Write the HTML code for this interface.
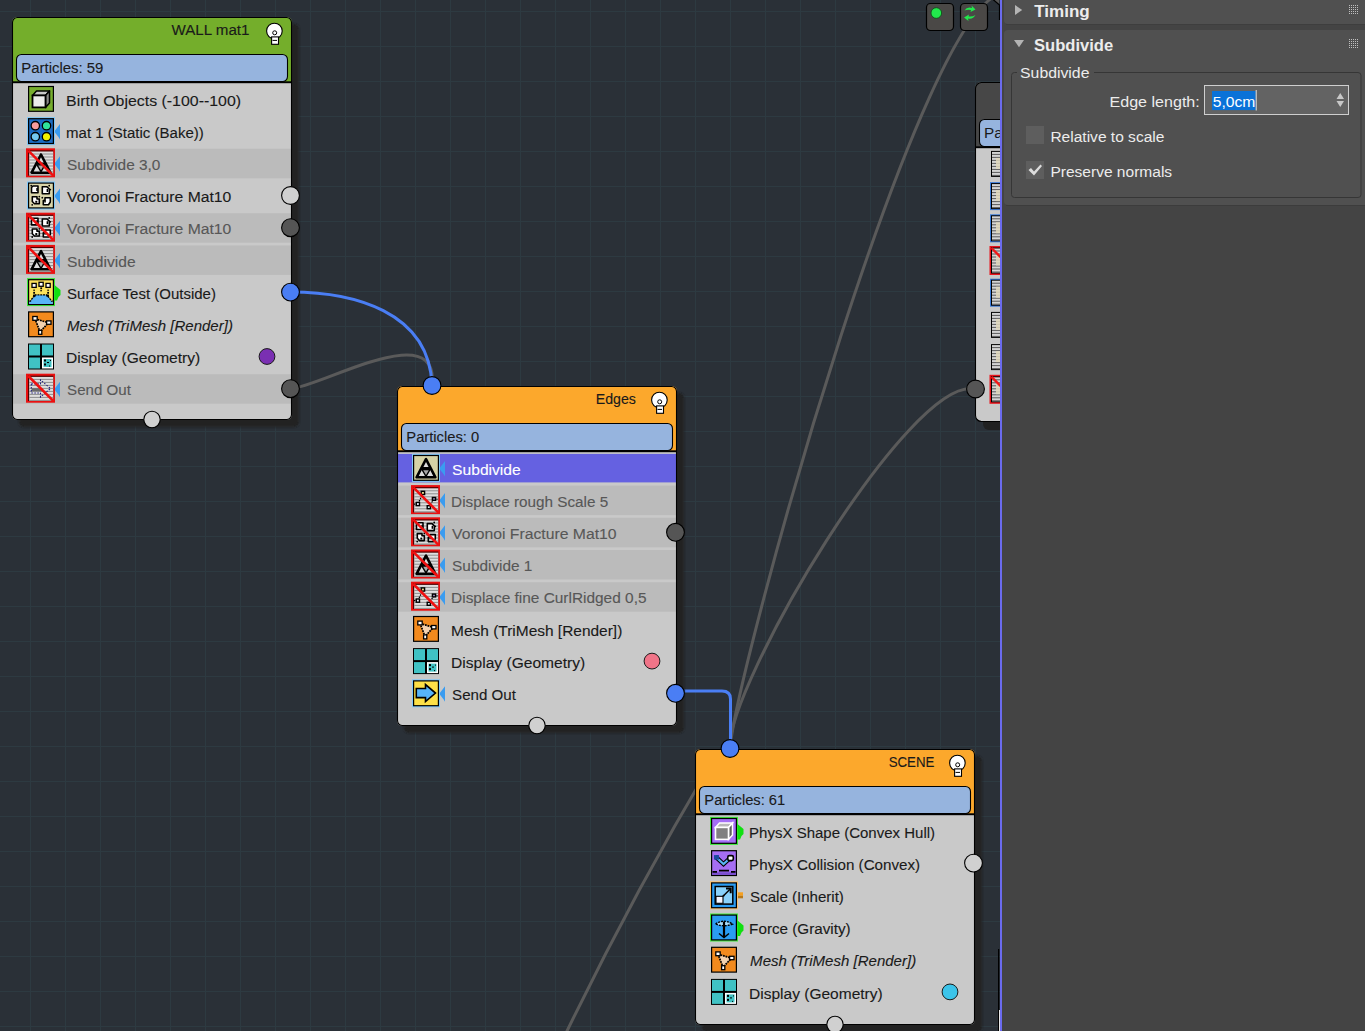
<!DOCTYPE html>
<html><head><meta charset="utf-8"><style>
html,body{margin:0;padding:0;background:#2a3037;overflow:hidden}
svg{display:block;font-family:'Liberation Sans', sans-serif}
</style></head><body>
<svg width="1365" height="1031" viewBox="0 0 1365 1031">
<defs><filter id="sh" x="-5%" y="-5%" width="110%" height="110%"><feGaussianBlur stdDeviation="0.8"/></filter></defs>
<rect x="0" y="0" width="1000" height="1031" fill="#2a3037"/>
<rect x="30" y="0" width="1" height="1031" fill="#2d3a41"/>
<rect x="65" y="0" width="1" height="1031" fill="#2d3a41"/>
<rect x="100" y="0" width="1" height="1031" fill="#2d3a41"/>
<rect x="135" y="0" width="1" height="1031" fill="#2d3a41"/>
<rect x="170" y="0" width="1" height="1031" fill="#2d3a41"/>
<rect x="205" y="0" width="1" height="1031" fill="#2d3a41"/>
<rect x="240" y="0" width="1" height="1031" fill="#2d3a41"/>
<rect x="275" y="0" width="1" height="1031" fill="#2d3a41"/>
<rect x="310" y="0" width="1" height="1031" fill="#2d3a41"/>
<rect x="345" y="0" width="1" height="1031" fill="#2d3a41"/>
<rect x="380" y="0" width="1" height="1031" fill="#2d3a41"/>
<rect x="415" y="0" width="1" height="1031" fill="#2d3a41"/>
<rect x="450" y="0" width="1" height="1031" fill="#2d3a41"/>
<rect x="485" y="0" width="1" height="1031" fill="#2d3a41"/>
<rect x="520" y="0" width="1" height="1031" fill="#2d3a41"/>
<rect x="555" y="0" width="1" height="1031" fill="#2d3a41"/>
<rect x="590" y="0" width="1" height="1031" fill="#2d3a41"/>
<rect x="625" y="0" width="1" height="1031" fill="#2d3a41"/>
<rect x="660" y="0" width="1" height="1031" fill="#2d3a41"/>
<rect x="695" y="0" width="1" height="1031" fill="#2d3a41"/>
<rect x="730" y="0" width="1" height="1031" fill="#2d3a41"/>
<rect x="765" y="0" width="1" height="1031" fill="#2d3a41"/>
<rect x="800" y="0" width="1" height="1031" fill="#2d3a41"/>
<rect x="835" y="0" width="1" height="1031" fill="#2d3a41"/>
<rect x="870" y="0" width="1" height="1031" fill="#2d3a41"/>
<rect x="905" y="0" width="1" height="1031" fill="#2d3a41"/>
<rect x="940" y="0" width="1" height="1031" fill="#2d3a41"/>
<rect x="975" y="0" width="1" height="1031" fill="#2d3a41"/>
<rect x="0" y="11" width="1000" height="1" fill="#2d3a41"/>
<rect x="0" y="46" width="1000" height="1" fill="#2d3a41"/>
<rect x="0" y="81" width="1000" height="1" fill="#2d3a41"/>
<rect x="0" y="116" width="1000" height="1" fill="#2d3a41"/>
<rect x="0" y="151" width="1000" height="1" fill="#2d3a41"/>
<rect x="0" y="186" width="1000" height="1" fill="#2d3a41"/>
<rect x="0" y="221" width="1000" height="1" fill="#2d3a41"/>
<rect x="0" y="256" width="1000" height="1" fill="#2d3a41"/>
<rect x="0" y="291" width="1000" height="1" fill="#2d3a41"/>
<rect x="0" y="326" width="1000" height="1" fill="#2d3a41"/>
<rect x="0" y="361" width="1000" height="1" fill="#2d3a41"/>
<rect x="0" y="396" width="1000" height="1" fill="#2d3a41"/>
<rect x="0" y="431" width="1000" height="1" fill="#2d3a41"/>
<rect x="0" y="466" width="1000" height="1" fill="#2d3a41"/>
<rect x="0" y="501" width="1000" height="1" fill="#2d3a41"/>
<rect x="0" y="536" width="1000" height="1" fill="#2d3a41"/>
<rect x="0" y="571" width="1000" height="1" fill="#2d3a41"/>
<rect x="0" y="606" width="1000" height="1" fill="#2d3a41"/>
<rect x="0" y="641" width="1000" height="1" fill="#2d3a41"/>
<rect x="0" y="676" width="1000" height="1" fill="#2d3a41"/>
<rect x="0" y="711" width="1000" height="1" fill="#2d3a41"/>
<rect x="0" y="746" width="1000" height="1" fill="#2d3a41"/>
<rect x="0" y="781" width="1000" height="1" fill="#2d3a41"/>
<rect x="0" y="816" width="1000" height="1" fill="#2d3a41"/>
<rect x="0" y="851" width="1000" height="1" fill="#2d3a41"/>
<rect x="0" y="886" width="1000" height="1" fill="#2d3a41"/>
<rect x="0" y="921" width="1000" height="1" fill="#2d3a41"/>
<rect x="0" y="956" width="1000" height="1" fill="#2d3a41"/>
<rect x="0" y="991" width="1000" height="1" fill="#2d3a41"/>
<rect x="0" y="1026" width="1000" height="1" fill="#2d3a41"/>
<path d="M1005,-6 C925.7,-13.4 737.8,663.3 730,748" fill="none" stroke="#5a5a5a" stroke-width="3"/>
<path d="M975,389 C909.8,374.8 725.9,688 730,748" fill="none" stroke="#5a5a5a" stroke-width="3"/>
<path d="M555,1056 C602.7,955.7 655.2,857.5 712,762" fill="none" stroke="#5a5a5a" stroke-width="3"/>
<path d="M290.5,388.7 C321.4,386.8 440.1,315.8 432,385.5" fill="none" stroke="#5a5a5a" stroke-width="3"/>
<path d="M290.5,292 C351.7,292 429.6,310.7 432,385.5" fill="none" stroke="#4a7ef4" stroke-width="3"/>
<path d="M675,691 H722 Q730.5,691 730.5,699 V748" fill="none" stroke="#4a7ef4" stroke-width="3"/>
<rect x="926.5" y="3.5" width="27" height="27" rx="4" fill="#4a4846" stroke="#000" stroke-width="1.2"/>
<circle cx="936.3" cy="13" r="5.3" fill="#22e84c" stroke="#0a4a14" stroke-width="0.8"/>
<rect x="960.5" y="3.5" width="27" height="27" rx="4" fill="#4a4846" stroke="#000" stroke-width="1.2"/>
<path d="M964.5,10.5 Q967,6.5 972,8 L971.5,5.5 L975.5,9.5 L970.5,12 L971,10 Q967,9.5 964.5,10.5 Z" fill="#22e84c"/>
<path d="M975.5,15 Q973,19.5 968,18.5 L968.5,21 L964,17.5 L969,14.5 L968.5,16.5 Q972.5,17 975.5,15 Z" fill="#22e84c"/>
<rect x="983" y="90" width="300" height="340" rx="6" fill="#212121"/>
<clipPath id="pclip"><rect x="975" y="82" width="300" height="339" rx="6.5"/></clipPath><g clip-path="url(#pclip)">
<rect x="975" y="82" width="300" height="339" fill="#c9c9c9"/>
<rect x="975" y="82" width="300" height="65" fill="#474747"/>
<rect x="979.5" y="119.5" width="291" height="27" rx="5" fill="#96b4de" stroke="#000" stroke-width="1.1"/>
<rect x="975" y="146.3" width="300" height="1.9" fill="#000"/>
<text x="984" y="137.7" font-size="15.3" fill="#1a1a1a">Particles</text>
<g transform="translate(991,150.90)"><rect x="0" y="0" width="26" height="26" fill="#000"/><rect x="1" y="1" width="24" height="24" fill="#d4d4d4"/><rect x="1" y="3" width="24" height="1" fill="#5a5a5a"/><rect x="1" y="6" width="24" height="1" fill="#5a5a5a"/><rect x="1" y="9" width="24" height="1" fill="#5a5a5a"/><rect x="1" y="12" width="24" height="1" fill="#5a5a5a"/><rect x="1" y="15" width="24" height="1" fill="#5a5a5a"/><rect x="1" y="18" width="24" height="1" fill="#5a5a5a"/><rect x="1" y="21" width="24" height="1" fill="#5a5a5a"/><rect x="1" y="24" width="24" height="1" fill="#5a5a5a"/><rect x="5" y="7" width="8" height="11" fill="#e0d8bc" opacity="0.85"/></g>
<g transform="translate(991,183.10)"><rect x="-1" y="-1" width="28" height="28" fill="#3a7ad8"/><rect x="0" y="0" width="26" height="26" fill="#000"/><rect x="1" y="1" width="24" height="24" fill="#d4d4d4"/><rect x="1" y="3" width="24" height="1" fill="#5a5a5a"/><rect x="1" y="6" width="24" height="1" fill="#5a5a5a"/><rect x="1" y="9" width="24" height="1" fill="#5a5a5a"/><rect x="1" y="12" width="24" height="1" fill="#5a5a5a"/><rect x="1" y="15" width="24" height="1" fill="#5a5a5a"/><rect x="1" y="18" width="24" height="1" fill="#5a5a5a"/><rect x="1" y="21" width="24" height="1" fill="#5a5a5a"/><rect x="1" y="24" width="24" height="1" fill="#5a5a5a"/><rect x="5" y="7" width="8" height="11" fill="#e0d8bc" opacity="0.85"/></g>
<g transform="translate(991,215.30)"><rect x="-1" y="-1" width="28" height="28" fill="#3a7ad8"/><rect x="0" y="0" width="26" height="26" fill="#000"/><rect x="1" y="1" width="24" height="24" fill="#d4d4d4"/><rect x="1" y="3" width="24" height="1" fill="#5a5a5a"/><rect x="1" y="6" width="24" height="1" fill="#5a5a5a"/><rect x="1" y="9" width="24" height="1" fill="#5a5a5a"/><rect x="1" y="12" width="24" height="1" fill="#5a5a5a"/><rect x="1" y="15" width="24" height="1" fill="#5a5a5a"/><rect x="1" y="18" width="24" height="1" fill="#5a5a5a"/><rect x="1" y="21" width="24" height="1" fill="#5a5a5a"/><rect x="1" y="24" width="24" height="1" fill="#5a5a5a"/><rect x="5" y="7" width="8" height="11" fill="#e0d8bc" opacity="0.85"/></g>
<g transform="translate(991,247.50)"><rect x="-1.5" y="-1.5" width="29" height="29" fill="#e8141c"/><rect x="0" y="0" width="26" height="26" fill="#000"/><rect x="1" y="1" width="24" height="24" fill="#d4d4d4"/><rect x="1" y="3" width="24" height="1" fill="#5a5a5a"/><rect x="1" y="6" width="24" height="1" fill="#5a5a5a"/><rect x="1" y="9" width="24" height="1" fill="#5a5a5a"/><rect x="1" y="12" width="24" height="1" fill="#5a5a5a"/><rect x="1" y="15" width="24" height="1" fill="#5a5a5a"/><rect x="1" y="18" width="24" height="1" fill="#5a5a5a"/><rect x="1" y="21" width="24" height="1" fill="#5a5a5a"/><rect x="1" y="24" width="24" height="1" fill="#5a5a5a"/><rect x="5" y="7" width="8" height="11" fill="#e0d8bc" opacity="0.85"/><path d="M0.5,0.5 L25.5,25.5" stroke="#f01818" stroke-width="2.4"/></g>
<g transform="translate(991,279.70)"><rect x="-1" y="-1" width="28" height="28" fill="#3a7ad8"/><rect x="0" y="0" width="26" height="26" fill="#000"/><rect x="1" y="1" width="24" height="24" fill="#d4d4d4"/><rect x="1" y="3" width="24" height="1" fill="#5a5a5a"/><rect x="1" y="6" width="24" height="1" fill="#5a5a5a"/><rect x="1" y="9" width="24" height="1" fill="#5a5a5a"/><rect x="1" y="12" width="24" height="1" fill="#5a5a5a"/><rect x="1" y="15" width="24" height="1" fill="#5a5a5a"/><rect x="1" y="18" width="24" height="1" fill="#5a5a5a"/><rect x="1" y="21" width="24" height="1" fill="#5a5a5a"/><rect x="1" y="24" width="24" height="1" fill="#5a5a5a"/><rect x="5" y="7" width="8" height="11" fill="#e0d8bc" opacity="0.85"/></g>
<g transform="translate(991,311.90)"><rect x="0" y="0" width="26" height="26" fill="#000"/><rect x="1" y="1" width="24" height="24" fill="#d4d4d4"/><rect x="1" y="3" width="24" height="1" fill="#5a5a5a"/><rect x="1" y="6" width="24" height="1" fill="#5a5a5a"/><rect x="1" y="9" width="24" height="1" fill="#5a5a5a"/><rect x="1" y="12" width="24" height="1" fill="#5a5a5a"/><rect x="1" y="15" width="24" height="1" fill="#5a5a5a"/><rect x="1" y="18" width="24" height="1" fill="#5a5a5a"/><rect x="1" y="21" width="24" height="1" fill="#5a5a5a"/><rect x="1" y="24" width="24" height="1" fill="#5a5a5a"/><rect x="5" y="7" width="8" height="11" fill="#e0d8bc" opacity="0.85"/></g>
<g transform="translate(991,344.10)"><rect x="0" y="0" width="26" height="26" fill="#000"/><rect x="1" y="1" width="24" height="24" fill="#d4d4d4"/><rect x="1" y="3" width="24" height="1" fill="#5a5a5a"/><rect x="1" y="6" width="24" height="1" fill="#5a5a5a"/><rect x="1" y="9" width="24" height="1" fill="#5a5a5a"/><rect x="1" y="12" width="24" height="1" fill="#5a5a5a"/><rect x="1" y="15" width="24" height="1" fill="#5a5a5a"/><rect x="1" y="18" width="24" height="1" fill="#5a5a5a"/><rect x="1" y="21" width="24" height="1" fill="#5a5a5a"/><rect x="1" y="24" width="24" height="1" fill="#5a5a5a"/><rect x="5" y="7" width="8" height="11" fill="#e0d8bc" opacity="0.85"/></g>
<g transform="translate(991,376.30)"><rect x="-1.5" y="-1.5" width="29" height="29" fill="#e8141c"/><rect x="0" y="0" width="26" height="26" fill="#000"/><rect x="1" y="1" width="24" height="24" fill="#d4d4d4"/><rect x="1" y="3" width="24" height="1" fill="#5a5a5a"/><rect x="1" y="6" width="24" height="1" fill="#5a5a5a"/><rect x="1" y="9" width="24" height="1" fill="#5a5a5a"/><rect x="1" y="12" width="24" height="1" fill="#5a5a5a"/><rect x="1" y="15" width="24" height="1" fill="#5a5a5a"/><rect x="1" y="18" width="24" height="1" fill="#5a5a5a"/><rect x="1" y="21" width="24" height="1" fill="#5a5a5a"/><rect x="1" y="24" width="24" height="1" fill="#5a5a5a"/><rect x="5" y="7" width="8" height="11" fill="#e0d8bc" opacity="0.85"/><path d="M0.5,0.5 L25.5,25.5" stroke="#f01818" stroke-width="2.4"/></g>
</g>
<rect x="975.5" y="82.5" width="300" height="339" rx="6" fill="none" stroke="#000" stroke-width="1.1"/>
<circle cx="975.5" cy="389" r="8.9" fill="#555555" stroke="#000" stroke-width="1.1"/>
<path d="M993,-10 V-1 L999,4.5 V-10 Z" fill="#555"/><path d="M992.5,-10 V-1 L999.5,5 V20" fill="none" stroke="#000" stroke-width="1.2"/>
<rect x="19" y="24" width="280" height="403" rx="5" fill="#202020" filter="url(#sh)"/>
<clipPath id="clip12_17"><rect x="12" y="17" width="280" height="403" rx="5.5"/></clipPath>
<g clip-path="url(#clip12_17)">
<rect x="12" y="17" width="280" height="403" fill="#c9c9c9"/>
<rect x="12" y="17" width="280" height="65" fill="#74ae2b"/>
<rect x="16.5" y="54.5" width="271" height="27" rx="5" fill="#96b4de" stroke="#000" stroke-width="1.1"/>
<rect x="12" y="81.3" width="280" height="1.9" fill="#000"/>
<text x="21.32" y="72.7" font-size="15.3" font-weight="normal" font-style="normal" fill="#1a1a1a" textLength="82.07" lengthAdjust="spacingAndGlyphs" stroke="#1a1a1a" stroke-width="0.12">Particles: 59</text>
<g transform="translate(28,85.90)"><rect x="0" y="0" width="26" height="26" fill="#000"/><rect x="1.2" y="1.2" width="23.6" height="23.6" fill="#77ae2e"/><polygon points="4.5,9.5 8.5,5 21.5,5 17.5,9.5" fill="#c8c8c8" stroke="#000" stroke-width="1.5" stroke-linejoin="round"/><polygon points="17.5,9.5 21.5,5 21.5,17 17.5,21.5" fill="#8a8a8a" stroke="#000" stroke-width="1.5" stroke-linejoin="round"/><rect x="4.5" y="9.5" width="13" height="12" fill="#ececec" stroke="#000" stroke-width="1.8"/></g>
<text x="66.06" y="105.6" font-size="15.3" font-weight="normal" font-style="normal" fill="#1a1a1a" textLength="175.04" lengthAdjust="spacingAndGlyphs" stroke="#1a1a1a" stroke-width="0.12">Birth Objects (-100--100)</text>
<g transform="translate(28,118.10)"><rect x="-1" y="-1" width="28" height="28" fill="#80c8f8"/><rect x="0" y="0" width="26" height="26" fill="#000"/><rect x="1.2" y="1.2" width="23.6" height="23.6" fill="#1a6cc4"/><circle cx="7.3" cy="7.6" r="4.2" fill="#f79c9c" stroke="#000" stroke-width="1.3"/><circle cx="18.5" cy="7.6" r="4.2" fill="#2fe39a" stroke="#000" stroke-width="1.3"/><circle cx="7.3" cy="18.6" r="4.2" fill="#72c8f2" stroke="#000" stroke-width="1.3"/><circle cx="18.5" cy="18.6" r="4.2" fill="#f2f200" stroke="#000" stroke-width="1.3"/></g>
<path d="M55,130.6 L60,124.1 L60,139.6 L58.5,137.1 L56.5,134.6 L55,132.6 Z" fill="#3a9cf0"/>
<text x="66.12" y="137.8" font-size="15.3" font-weight="normal" font-style="normal" fill="#1a1a1a" textLength="137.67" lengthAdjust="spacingAndGlyphs" stroke="#1a1a1a" stroke-width="0.12">mat 1 (Static (Bake))</text>
<rect x="12" y="148.8" width="280" height="29.5" fill="#bbbbbb"/>
<g transform="translate(28,150.30)"><rect x="-2" y="-2" width="29" height="29" fill="#ea1010"/><rect x="0" y="0" width="25.3" height="25.3" fill="#500000"/><g transform="translate(0.2,0.2)"><rect x="1" y="1" width="24" height="24" fill="#dedede"/><rect x="1" y="3" width="24" height="1" fill="#8e8e8e"/><rect x="1" y="6" width="24" height="1" fill="#8e8e8e"/><rect x="1" y="9" width="24" height="1" fill="#8e8e8e"/><rect x="1" y="12" width="24" height="1" fill="#8e8e8e"/><rect x="1" y="15" width="24" height="1" fill="#8e8e8e"/><rect x="1" y="18" width="24" height="1" fill="#8e8e8e"/><rect x="1" y="21" width="24" height="1" fill="#8e8e8e"/><rect x="1" y="24" width="24" height="1" fill="#8e8e8e"/></g><polygon points="13,4.2 3.6,22.4 22.4,22.4" fill="#dcdcdc" stroke="#000" stroke-width="2.6" stroke-linejoin="round"/><path d="M8.2,13.3 H17.8" stroke="#000" stroke-width="2.2"/><polygon points="9,14.6 17,14.6 13,21.4" fill="#a8a8a8" stroke="#000" stroke-width="1.4"/><path d="M0.3,0.3 L25.5,25.5" stroke="#f01010" stroke-width="2.6"/></g>
<path d="M55,162.8 L60,156.3 L60,171.8 L58.5,169.3 L56.5,166.8 L55,164.8 Z" fill="#3a9cf0"/>
<text x="67.10" y="170.0" font-size="15.3" font-weight="normal" font-style="normal" fill="#575757" textLength="93.31" lengthAdjust="spacingAndGlyphs" stroke="#575757" stroke-width="0.12">Subdivide 3,0</text>
<g transform="translate(28,182.50)"><rect x="-1" y="-1" width="28" height="28" fill="#80c8f8"/><rect x="0" y="0" width="26" height="26" fill="#000"/><rect x="1.2" y="1.2" width="23.6" height="23.6" fill="#dad6aa"/><path d="M3.5,5 L5,3.5 H10 V10.2 H3.5 Z" fill="#fff" stroke="#000" stroke-width="1.6" stroke-linejoin="round"/><path d="M14.3,4.3 H19 L21.3,6.5 V11.3 H14.3 Z" fill="#fff" stroke="#000" stroke-width="1.6" stroke-linejoin="round"/><path d="M4.3,14.3 H9 V16.5 H11.3 V21.3 H6.5 L4.3,19 Z" fill="#fff" stroke="#000" stroke-width="1.6" stroke-linejoin="round"/><path d="M17,15.3 H22.3 V19.5 L20.5,22.3 H15.3 V18 H17 Z" fill="#fff" stroke="#000" stroke-width="1.6" stroke-linejoin="round"/><rect x="8.3" y="5.5" width="1.5" height="3" fill="#000"/><rect x="18.6" y="6.5" width="1.5" height="3" fill="#000"/><rect x="7.3" y="18.3" width="2" height="2" fill="#000"/><rect x="16.3" y="18" width="1.5" height="2" fill="#000"/><circle cx="3.2" cy="3.2" r="0.9" fill="#000"/><circle cx="21.2" cy="3.2" r="0.9" fill="#000"/><circle cx="22.3" cy="7.1" r="0.9" fill="#000"/><circle cx="11.3" cy="14.1" r="0.9" fill="#000"/><circle cx="14.3" cy="15.2" r="0.9" fill="#000"/><circle cx="4.2" cy="22.3" r="0.9" fill="#000"/></g>
<path d="M55,195.0 L60,188.5 L60,204.0 L58.5,201.5 L56.5,199.0 L55,197.0 Z" fill="#3a9cf0"/>
<text x="67.10" y="202.2" font-size="15.3" font-weight="normal" font-style="normal" fill="#1a1a1a" textLength="164.22" lengthAdjust="spacingAndGlyphs" stroke="#1a1a1a" stroke-width="0.12">Voronoi Fracture Mat10</text>
<rect x="12" y="213.20000000000002" width="280" height="29.5" fill="#bbbbbb"/>
<g transform="translate(28,214.70)"><rect x="-2" y="-2" width="29" height="29" fill="#ea1010"/><rect x="0" y="0" width="25.3" height="25.3" fill="#500000"/><g transform="translate(0.2,0.2)"><rect x="1" y="1" width="24" height="24" fill="#dedede"/><rect x="1" y="3" width="24" height="1" fill="#8e8e8e"/><rect x="1" y="6" width="24" height="1" fill="#8e8e8e"/><rect x="1" y="9" width="24" height="1" fill="#8e8e8e"/><rect x="1" y="12" width="24" height="1" fill="#8e8e8e"/><rect x="1" y="15" width="24" height="1" fill="#8e8e8e"/><rect x="1" y="18" width="24" height="1" fill="#8e8e8e"/><rect x="1" y="21" width="24" height="1" fill="#8e8e8e"/><rect x="1" y="24" width="24" height="1" fill="#8e8e8e"/></g><path d="M3.5,5 L5,3.5 H10 V10.2 H3.5 Z" fill="#fff" stroke="#000" stroke-width="1.6" stroke-linejoin="round"/><path d="M14.3,4.3 H19 L21.3,6.5 V11.3 H14.3 Z" fill="#fff" stroke="#000" stroke-width="1.6" stroke-linejoin="round"/><path d="M4.3,14.3 H9 V16.5 H11.3 V21.3 H6.5 L4.3,19 Z" fill="#fff" stroke="#000" stroke-width="1.6" stroke-linejoin="round"/><path d="M17,15.3 H22.3 V19.5 L20.5,22.3 H15.3 V18 H17 Z" fill="#fff" stroke="#000" stroke-width="1.6" stroke-linejoin="round"/><rect x="8.3" y="5.5" width="1.5" height="3" fill="#000"/><rect x="18.6" y="6.5" width="1.5" height="3" fill="#000"/><rect x="7.3" y="18.3" width="2" height="2" fill="#000"/><rect x="16.3" y="18" width="1.5" height="2" fill="#000"/><circle cx="3.2" cy="3.2" r="0.9" fill="#000"/><circle cx="21.2" cy="3.2" r="0.9" fill="#000"/><circle cx="22.3" cy="7.1" r="0.9" fill="#000"/><circle cx="11.3" cy="14.1" r="0.9" fill="#000"/><circle cx="14.3" cy="15.2" r="0.9" fill="#000"/><circle cx="4.2" cy="22.3" r="0.9" fill="#000"/><path d="M0.3,0.3 L25.5,25.5" stroke="#f01010" stroke-width="2.6"/></g>
<path d="M55,227.2 L60,220.7 L60,236.2 L58.5,233.7 L56.5,231.2 L55,229.2 Z" fill="#3a9cf0"/>
<text x="67.10" y="234.4" font-size="15.3" font-weight="normal" font-style="normal" fill="#575757" textLength="164.22" lengthAdjust="spacingAndGlyphs" stroke="#575757" stroke-width="0.12">Voronoi Fracture Mat10</text>
<rect x="12" y="245.39999999999998" width="280" height="29.5" fill="#bbbbbb"/>
<g transform="translate(28,246.90)"><rect x="-2" y="-2" width="29" height="29" fill="#ea1010"/><rect x="0" y="0" width="25.3" height="25.3" fill="#500000"/><g transform="translate(0.2,0.2)"><rect x="1" y="1" width="24" height="24" fill="#dedede"/><rect x="1" y="3" width="24" height="1" fill="#8e8e8e"/><rect x="1" y="6" width="24" height="1" fill="#8e8e8e"/><rect x="1" y="9" width="24" height="1" fill="#8e8e8e"/><rect x="1" y="12" width="24" height="1" fill="#8e8e8e"/><rect x="1" y="15" width="24" height="1" fill="#8e8e8e"/><rect x="1" y="18" width="24" height="1" fill="#8e8e8e"/><rect x="1" y="21" width="24" height="1" fill="#8e8e8e"/><rect x="1" y="24" width="24" height="1" fill="#8e8e8e"/></g><polygon points="13,4.2 3.6,22.4 22.4,22.4" fill="#dcdcdc" stroke="#000" stroke-width="2.6" stroke-linejoin="round"/><path d="M8.2,13.3 H17.8" stroke="#000" stroke-width="2.2"/><polygon points="9,14.6 17,14.6 13,21.4" fill="#a8a8a8" stroke="#000" stroke-width="1.4"/><path d="M0.3,0.3 L25.5,25.5" stroke="#f01010" stroke-width="2.6"/></g>
<path d="M55,259.4 L60,252.89999999999998 L60,268.4 L58.5,265.9 L56.5,263.4 L55,261.4 Z" fill="#3a9cf0"/>
<text x="67.10" y="266.6" font-size="15.3" font-weight="normal" font-style="normal" fill="#575757" textLength="68.52" lengthAdjust="spacingAndGlyphs" stroke="#575757" stroke-width="0.12">Subdivide</text>
<g transform="translate(28,279.10)"><rect x="-1" y="-1" width="28" height="28" fill="#3ee83a"/><rect x="0" y="0" width="26" height="26" fill="#000"/><rect x="1.2" y="1.2" width="23.6" height="23.6" fill="#fce35c"/><path d="M1.2,24.8 V22 H2.5 Q5,18 7.5,15.8 H18.5 Q21,18 23.5,22 H24.8 V24.8 Z" fill="#58b4f8"/><path d="M1.2,22 H2.5 Q5,18 7.5,15.8 H18.5 Q21,18 23.5,22 H24.8" fill="none" stroke="#000" stroke-width="1.4" stroke-dasharray="2,0.8"/><rect x="4" y="4.3" width="4.2" height="4" fill="#fff" stroke="#000" stroke-width="1.3"/><rect x="11" y="3.2" width="4.2" height="4" fill="#fff" stroke="#000" stroke-width="1.3"/><rect x="18" y="4.3" width="4.2" height="4" fill="#fff" stroke="#000" stroke-width="1.3"/><rect x="5.3" y="10.5" width="1.6" height="1.2" fill="#000"/><rect x="5.2" y="12.8" width="1.8" height="1.8" fill="#000"/><rect x="12.3" y="8.3" width="1.8" height="1.8" fill="#000"/><rect x="12.3" y="11" width="1.6" height="1.2" fill="#000"/><rect x="19.3" y="10.5" width="1.6" height="1.2" fill="#000"/><rect x="19.2" y="12.8" width="1.8" height="1.8" fill="#000"/><rect x="5" y="15.5" width="2.5" height="2.2" fill="#000"/><rect x="18.5" y="15.5" width="2.5" height="2.2" fill="#000"/></g>
<path d="M54.5,285.1 L60.5,290.1 V295.1 L58.5,297.1 L57,300.6 L54.5,300.6 Z" fill="#10e010"/>
<text x="67.10" y="298.8" font-size="15.3" font-weight="normal" font-style="normal" fill="#1a1a1a" textLength="148.79" lengthAdjust="spacingAndGlyphs" stroke="#1a1a1a" stroke-width="0.12">Surface Test (Outside)</text>
<g transform="translate(28,311.30)"><rect x="0" y="0" width="26" height="26" fill="#000"/><rect x="1.2" y="1.2" width="23.6" height="23.6" fill="#f28a1e"/><polygon points="7,7.5 20.5,11.5 12,20.5" fill="#f3d2b0" stroke="#000" stroke-width="1.7" stroke-dasharray="1.8,0.8"/><rect x="4.8" y="5.2" width="4.4" height="3.8" fill="#fff" stroke="#000" stroke-width="1.3"/><rect x="18.6" y="9.6" width="4.4" height="3.4" fill="#fff" stroke="#000" stroke-width="1.3"/><rect x="10.6" y="19" width="3.2" height="4" fill="#fff" stroke="#000" stroke-width="1.3"/></g>
<text x="67.10" y="331.0" font-size="15.3" font-weight="normal" font-style="italic" fill="#1a1a1a" textLength="165.79" lengthAdjust="spacingAndGlyphs" stroke="#1a1a1a" stroke-width="0.12">Mesh (TriMesh [Render])</text>
<g transform="translate(28,343.50)"><rect x="0" y="0" width="26" height="26" fill="#000"/><rect x="1" y="1" width="11" height="11" fill="#40c2c4"/><rect x="14" y="1" width="11" height="11" fill="#40c2c4"/><rect x="1" y="14" width="11" height="11" fill="#40c2c4"/><rect x="14" y="14" width="11" height="11" fill="#fff"/><rect x="15.5" y="15.5" width="8" height="8" fill="#40c2c4"/><rect x="16" y="16" width="2" height="2" fill="#000"/><rect x="16" y="20" width="2" height="2" fill="#000"/><rect x="19" y="18.5" width="2" height="1" fill="#000"/><rect x="22" y="16.5" width="1" height="1" fill="#000"/><rect x="21" y="22" width="1" height="1" fill="#000"/></g>
<text x="66.08" y="363.2" font-size="15.3" font-weight="normal" font-style="normal" fill="#1a1a1a" textLength="134.21" lengthAdjust="spacingAndGlyphs" stroke="#1a1a1a" stroke-width="0.12">Display (Geometry)</text>
<circle cx="267" cy="356.50" r="7.9" fill="#7a2fb2" stroke="#1a1a1a" stroke-width="1"/>
<rect x="12" y="374.20000000000005" width="280" height="29.5" fill="#bbbbbb"/>
<g transform="translate(28,375.70)"><rect x="-2" y="-2" width="29" height="29" fill="#ea1010"/><rect x="0" y="0" width="25.3" height="25.3" fill="#500000"/><g transform="translate(0.2,0.2)"><rect x="1" y="1" width="24" height="24" fill="#dedede"/><rect x="1" y="3" width="24" height="1" fill="#8e8e8e"/><rect x="1" y="6" width="24" height="1" fill="#8e8e8e"/><rect x="1" y="9" width="24" height="1" fill="#8e8e8e"/><rect x="1" y="12" width="24" height="1" fill="#8e8e8e"/><rect x="1" y="15" width="24" height="1" fill="#8e8e8e"/><rect x="1" y="18" width="24" height="1" fill="#8e8e8e"/><rect x="1" y="21" width="24" height="1" fill="#8e8e8e"/><rect x="1" y="24" width="24" height="1" fill="#8e8e8e"/></g><rect x="3.5" y="12.5" width="11" height="3" fill="#6a6a6a"/><path d="M3.3,8.2 H12.5 V4.3 L22.5,12.8 L12.5,21.3 V17.3 H3.3 Z" fill="none" stroke="#202080" stroke-width="1.1" stroke-dasharray="1.5,1.5"/><path d="M0.3,0.3 L25.5,25.5" stroke="#f01010" stroke-width="2.6"/></g>
<path d="M55,388.2 L60,381.7 L60,397.2 L58.5,394.7 L56.5,392.2 L55,390.2 Z" fill="#3a9cf0"/>
<text x="67.10" y="395.4" font-size="15.3" font-weight="normal" font-style="normal" fill="#575757" textLength="63.76" lengthAdjust="spacingAndGlyphs" stroke="#575757" stroke-width="0.12">Send Out</text>
</g>
<rect x="12.5" y="17.5" width="279" height="402" rx="5" fill="none" stroke="#000" stroke-width="1.1"/>
<text x="171.50" y="34.7" font-size="15.3" font-weight="normal" font-style="normal" fill="#1a1a1a" textLength="78.00" lengthAdjust="spacingAndGlyphs" stroke="#1a1a1a" stroke-width="0.12">WALL mat1</text>
<circle cx="274.4" cy="31" r="7.8" fill="#fff" stroke="#000" stroke-width="1.1"/><rect x="271.6" y="36.9" width="6.9" height="7.4" fill="#fff" stroke="#000" stroke-width="1.1"/><circle cx="274.7" cy="32.8" r="2" fill="#fff" stroke="#000" stroke-width="1"/><path d="M272.5,40.4 H277" stroke="#000" stroke-width="1"/>
<circle cx="290.5" cy="195.5" r="8.9" fill="#d0d0d0" stroke="#000" stroke-width="1.1"/>
<circle cx="290.5" cy="227.7" r="8.9" fill="#555555" stroke="#000" stroke-width="1.1"/>
<circle cx="290.5" cy="292.1" r="8.9" fill="#4a7ef4" stroke="#000" stroke-width="1.1"/>
<circle cx="290.5" cy="388.7" r="8.9" fill="#555555" stroke="#000" stroke-width="1.1"/>
<circle cx="152.0" cy="419.5" r="8.2" fill="#d0d0d0" stroke="#000" stroke-width="1.1"/>
<rect x="404" y="393" width="280" height="340" rx="5" fill="#202020" filter="url(#sh)"/>
<clipPath id="clip397_386"><rect x="397" y="386" width="280" height="340" rx="5.5"/></clipPath>
<g clip-path="url(#clip397_386)">
<rect x="397" y="386" width="280" height="340" fill="#c9c9c9"/>
<rect x="397" y="386" width="280" height="65" fill="#fca82c"/>
<rect x="401.5" y="423.5" width="271" height="27" rx="5" fill="#96b4de" stroke="#000" stroke-width="1.1"/>
<rect x="397" y="450.3" width="280" height="1.9" fill="#000"/>
<text x="406.34" y="441.7" font-size="15.3" font-weight="normal" font-style="normal" fill="#1a1a1a" textLength="72.85" lengthAdjust="spacingAndGlyphs" stroke="#1a1a1a" stroke-width="0.12">Particles: 0</text>
<rect x="397" y="453.9" width="280" height="28.5" fill="#6561e1"/>
<g transform="translate(413,454.90)"><rect x="-1" y="-1" width="28" height="28" fill="#80c8f8"/><rect x="0" y="0" width="26" height="26" fill="#000"/><rect x="1.2" y="1.2" width="23.6" height="23.6" fill="#d6d3a6"/><polygon points="13,4.2 3.6,22.4 22.4,22.4" fill="#dcdcdc" stroke="#000" stroke-width="2.6" stroke-linejoin="round"/><path d="M8.2,13.3 H17.8" stroke="#000" stroke-width="2.2"/><polygon points="9,14.6 17,14.6 13,21.4" fill="#a8a8a8" stroke="#000" stroke-width="1.4"/></g>
<path d="M440,467.4 L445,460.9 L445,476.4 L443.5,473.9 L441.5,471.4 L440,469.4 Z" fill="#3a9cf0"/>
<text x="452.10" y="474.6" font-size="15.3" font-weight="normal" font-style="normal" fill="#ffffff" textLength="68.62" lengthAdjust="spacingAndGlyphs" stroke="#ffffff" stroke-width="0.12">Subdivide</text>
<rect x="397" y="485.59999999999997" width="280" height="29.5" fill="#bbbbbb"/>
<g transform="translate(413,487.10)"><rect x="-2" y="-2" width="29" height="29" fill="#ea1010"/><rect x="0" y="0" width="25.3" height="25.3" fill="#500000"/><g transform="translate(0.2,0.2)"><rect x="1" y="1" width="24" height="24" fill="#dedede"/><rect x="1" y="3" width="24" height="1" fill="#8e8e8e"/><rect x="1" y="6" width="24" height="1" fill="#8e8e8e"/><rect x="1" y="9" width="24" height="1" fill="#8e8e8e"/><rect x="1" y="12" width="24" height="1" fill="#8e8e8e"/><rect x="1" y="15" width="24" height="1" fill="#8e8e8e"/><rect x="1" y="18" width="24" height="1" fill="#8e8e8e"/><rect x="1" y="21" width="24" height="1" fill="#8e8e8e"/><rect x="1" y="24" width="24" height="1" fill="#8e8e8e"/></g><path d="M1,17 H4 M5,16.5 L9.5,7.5 M15.8,19.5 L21,12 M22,12 H25" stroke="#000" stroke-width="1.2" fill="none" stroke-dasharray="1.5,1"/><rect x="8.2" y="4.2" width="3.4" height="3.2" fill="#e8dc90" stroke="#000" stroke-width="1.4"/><rect x="3.3" y="15.3" width="3.2" height="3.2" fill="#f0f0ff" stroke="#000" stroke-width="1.4"/><rect x="19.4" y="10.4" width="3.2" height="2.8" fill="#a090c0" stroke="#000" stroke-width="1.4"/><rect x="14.2" y="18.6" width="3.2" height="3" fill="#d8f0f0" stroke="#000" stroke-width="1.4"/><path d="M0.3,0.3 L25.5,25.5" stroke="#f01010" stroke-width="2.6"/></g>
<path d="M440,499.6 L445,493.1 L445,508.6 L443.5,506.1 L441.5,503.6 L440,501.6 Z" fill="#3a9cf0"/>
<text x="451.10" y="506.8" font-size="15.3" font-weight="normal" font-style="normal" fill="#575757" textLength="157.11" lengthAdjust="spacingAndGlyphs" stroke="#575757" stroke-width="0.12">Displace rough Scale 5</text>
<rect x="397" y="517.8" width="280" height="29.5" fill="#bbbbbb"/>
<g transform="translate(413,519.30)"><rect x="-2" y="-2" width="29" height="29" fill="#ea1010"/><rect x="0" y="0" width="25.3" height="25.3" fill="#500000"/><g transform="translate(0.2,0.2)"><rect x="1" y="1" width="24" height="24" fill="#dedede"/><rect x="1" y="3" width="24" height="1" fill="#8e8e8e"/><rect x="1" y="6" width="24" height="1" fill="#8e8e8e"/><rect x="1" y="9" width="24" height="1" fill="#8e8e8e"/><rect x="1" y="12" width="24" height="1" fill="#8e8e8e"/><rect x="1" y="15" width="24" height="1" fill="#8e8e8e"/><rect x="1" y="18" width="24" height="1" fill="#8e8e8e"/><rect x="1" y="21" width="24" height="1" fill="#8e8e8e"/><rect x="1" y="24" width="24" height="1" fill="#8e8e8e"/></g><path d="M3.5,5 L5,3.5 H10 V10.2 H3.5 Z" fill="#fff" stroke="#000" stroke-width="1.6" stroke-linejoin="round"/><path d="M14.3,4.3 H19 L21.3,6.5 V11.3 H14.3 Z" fill="#fff" stroke="#000" stroke-width="1.6" stroke-linejoin="round"/><path d="M4.3,14.3 H9 V16.5 H11.3 V21.3 H6.5 L4.3,19 Z" fill="#fff" stroke="#000" stroke-width="1.6" stroke-linejoin="round"/><path d="M17,15.3 H22.3 V19.5 L20.5,22.3 H15.3 V18 H17 Z" fill="#fff" stroke="#000" stroke-width="1.6" stroke-linejoin="round"/><rect x="8.3" y="5.5" width="1.5" height="3" fill="#000"/><rect x="18.6" y="6.5" width="1.5" height="3" fill="#000"/><rect x="7.3" y="18.3" width="2" height="2" fill="#000"/><rect x="16.3" y="18" width="1.5" height="2" fill="#000"/><circle cx="3.2" cy="3.2" r="0.9" fill="#000"/><circle cx="21.2" cy="3.2" r="0.9" fill="#000"/><circle cx="22.3" cy="7.1" r="0.9" fill="#000"/><circle cx="11.3" cy="14.1" r="0.9" fill="#000"/><circle cx="14.3" cy="15.2" r="0.9" fill="#000"/><circle cx="4.2" cy="22.3" r="0.9" fill="#000"/><path d="M0.3,0.3 L25.5,25.5" stroke="#f01010" stroke-width="2.6"/></g>
<path d="M440,531.8 L445,525.3 L445,540.8 L443.5,538.3 L441.5,535.8 L440,533.8 Z" fill="#3a9cf0"/>
<text x="452.10" y="539.0" font-size="15.3" font-weight="normal" font-style="normal" fill="#575757" textLength="164.52" lengthAdjust="spacingAndGlyphs" stroke="#575757" stroke-width="0.12">Voronoi Fracture Mat10</text>
<rect x="397" y="550.0" width="280" height="29.5" fill="#bbbbbb"/>
<g transform="translate(413,551.50)"><rect x="-2" y="-2" width="29" height="29" fill="#ea1010"/><rect x="0" y="0" width="25.3" height="25.3" fill="#500000"/><g transform="translate(0.2,0.2)"><rect x="1" y="1" width="24" height="24" fill="#dedede"/><rect x="1" y="3" width="24" height="1" fill="#8e8e8e"/><rect x="1" y="6" width="24" height="1" fill="#8e8e8e"/><rect x="1" y="9" width="24" height="1" fill="#8e8e8e"/><rect x="1" y="12" width="24" height="1" fill="#8e8e8e"/><rect x="1" y="15" width="24" height="1" fill="#8e8e8e"/><rect x="1" y="18" width="24" height="1" fill="#8e8e8e"/><rect x="1" y="21" width="24" height="1" fill="#8e8e8e"/><rect x="1" y="24" width="24" height="1" fill="#8e8e8e"/></g><polygon points="13,4.2 3.6,22.4 22.4,22.4" fill="#dcdcdc" stroke="#000" stroke-width="2.6" stroke-linejoin="round"/><path d="M8.2,13.3 H17.8" stroke="#000" stroke-width="2.2"/><polygon points="9,14.6 17,14.6 13,21.4" fill="#a8a8a8" stroke="#000" stroke-width="1.4"/><path d="M0.3,0.3 L25.5,25.5" stroke="#f01010" stroke-width="2.6"/></g>
<path d="M440,564.0 L445,557.5 L445,573.0 L443.5,570.5 L441.5,568.0 L440,566.0 Z" fill="#3a9cf0"/>
<text x="452.10" y="571.2" font-size="15.3" font-weight="normal" font-style="normal" fill="#575757" textLength="80.31" lengthAdjust="spacingAndGlyphs" stroke="#575757" stroke-width="0.12">Subdivide 1</text>
<rect x="397" y="582.2" width="280" height="29.5" fill="#bbbbbb"/>
<g transform="translate(413,583.70)"><rect x="-2" y="-2" width="29" height="29" fill="#ea1010"/><rect x="0" y="0" width="25.3" height="25.3" fill="#500000"/><g transform="translate(0.2,0.2)"><rect x="1" y="1" width="24" height="24" fill="#dedede"/><rect x="1" y="3" width="24" height="1" fill="#8e8e8e"/><rect x="1" y="6" width="24" height="1" fill="#8e8e8e"/><rect x="1" y="9" width="24" height="1" fill="#8e8e8e"/><rect x="1" y="12" width="24" height="1" fill="#8e8e8e"/><rect x="1" y="15" width="24" height="1" fill="#8e8e8e"/><rect x="1" y="18" width="24" height="1" fill="#8e8e8e"/><rect x="1" y="21" width="24" height="1" fill="#8e8e8e"/><rect x="1" y="24" width="24" height="1" fill="#8e8e8e"/></g><path d="M1,17 H4 M5,16.5 L9.5,7.5 M15.8,19.5 L21,12 M22,12 H25" stroke="#000" stroke-width="1.2" fill="none" stroke-dasharray="1.5,1"/><rect x="8.2" y="4.2" width="3.4" height="3.2" fill="#e8dc90" stroke="#000" stroke-width="1.4"/><rect x="3.3" y="15.3" width="3.2" height="3.2" fill="#f0f0ff" stroke="#000" stroke-width="1.4"/><rect x="19.4" y="10.4" width="3.2" height="2.8" fill="#a090c0" stroke="#000" stroke-width="1.4"/><rect x="14.2" y="18.6" width="3.2" height="3" fill="#d8f0f0" stroke="#000" stroke-width="1.4"/><path d="M0.3,0.3 L25.5,25.5" stroke="#f01010" stroke-width="2.6"/></g>
<path d="M440,596.2 L445,589.7 L445,605.2 L443.5,602.7 L441.5,600.2 L440,598.2 Z" fill="#3a9cf0"/>
<text x="451.09" y="603.4" font-size="15.3" font-weight="normal" font-style="normal" fill="#575757" textLength="195.42" lengthAdjust="spacingAndGlyphs" stroke="#575757" stroke-width="0.12">Displace fine CurlRidged 0,5</text>
<g transform="translate(413,615.90)"><rect x="0" y="0" width="26" height="26" fill="#000"/><rect x="1.2" y="1.2" width="23.6" height="23.6" fill="#f28a1e"/><polygon points="7,7.5 20.5,11.5 12,20.5" fill="#f3d2b0" stroke="#000" stroke-width="1.7" stroke-dasharray="1.8,0.8"/><rect x="4.8" y="5.2" width="4.4" height="3.8" fill="#fff" stroke="#000" stroke-width="1.3"/><rect x="18.6" y="9.6" width="4.4" height="3.4" fill="#fff" stroke="#000" stroke-width="1.3"/><rect x="10.6" y="19" width="3.2" height="4" fill="#fff" stroke="#000" stroke-width="1.3"/></g>
<text x="451.09" y="635.6" font-size="15.3" font-weight="normal" font-style="normal" fill="#1a1a1a" textLength="171.21" lengthAdjust="spacingAndGlyphs" stroke="#1a1a1a" stroke-width="0.12">Mesh (TriMesh [Render])</text>
<g transform="translate(413,648.10)"><rect x="0" y="0" width="26" height="26" fill="#000"/><rect x="1" y="1" width="11" height="11" fill="#40c2c4"/><rect x="14" y="1" width="11" height="11" fill="#40c2c4"/><rect x="1" y="14" width="11" height="11" fill="#40c2c4"/><rect x="14" y="14" width="11" height="11" fill="#fff"/><rect x="15.5" y="15.5" width="8" height="8" fill="#40c2c4"/><rect x="16" y="16" width="2" height="2" fill="#000"/><rect x="16" y="20" width="2" height="2" fill="#000"/><rect x="19" y="18.5" width="2" height="1" fill="#000"/><rect x="22" y="16.5" width="1" height="1" fill="#000"/><rect x="21" y="22" width="1" height="1" fill="#000"/></g>
<text x="451.08" y="667.8" font-size="15.3" font-weight="normal" font-style="normal" fill="#1a1a1a" textLength="134.11" lengthAdjust="spacingAndGlyphs" stroke="#1a1a1a" stroke-width="0.12">Display (Geometry)</text>
<circle cx="652" cy="661.10" r="7.9" fill="#f07488" stroke="#1a1a1a" stroke-width="1"/>
<g transform="translate(413,680.30)"><rect x="-1" y="-1" width="28" height="28" fill="#80c8f8"/><rect x="0" y="0" width="26" height="26" fill="#000"/><rect x="1.2" y="1.2" width="23.6" height="23.6" fill="#fde047"/><path d="M3.3,8.2 H12.5 V4.3 L22.5,12.8 L12.5,21.3 V17.3 H3.3 Z" fill="#56b4f8" stroke="#000" stroke-width="1.6" stroke-linejoin="miter"/></g>
<path d="M440,692.8 L445,686.3 L445,701.8 L443.5,699.3 L441.5,696.8 L440,694.8 Z" fill="#3a9cf0"/>
<text x="452.10" y="700.0" font-size="15.3" font-weight="normal" font-style="normal" fill="#1a1a1a" textLength="63.76" lengthAdjust="spacingAndGlyphs" stroke="#1a1a1a" stroke-width="0.12">Send Out</text>
</g>
<rect x="397.5" y="386.5" width="279" height="339" rx="5" fill="none" stroke="#000" stroke-width="1.1"/>
<text x="595.72" y="403.7" font-size="15.3" font-weight="normal" font-style="normal" fill="#1a1a1a" textLength="40.20" lengthAdjust="spacingAndGlyphs" stroke="#1a1a1a" stroke-width="0.12">Edges</text>
<circle cx="659.4" cy="400" r="7.8" fill="#fff" stroke="#000" stroke-width="1.1"/><rect x="656.6" y="405.9" width="6.9" height="7.4" fill="#fff" stroke="#000" stroke-width="1.1"/><circle cx="659.7" cy="401.8" r="2" fill="#fff" stroke="#000" stroke-width="1"/><path d="M657.5,409.4 H662" stroke="#000" stroke-width="1"/>
<circle cx="675.5" cy="532.3" r="8.9" fill="#555555" stroke="#000" stroke-width="1.1"/>
<circle cx="675.5" cy="693.3" r="8.9" fill="#4a7ef4" stroke="#000" stroke-width="1.1"/>
<circle cx="537.0" cy="725.5" r="8.2" fill="#d0d0d0" stroke="#000" stroke-width="1.1"/>
<circle cx="432" cy="385.5" r="8.9" fill="#4a7ef4" stroke="#000" stroke-width="1.1"/>
<rect x="702" y="756" width="280" height="276" rx="5" fill="#202020" filter="url(#sh)"/>
<clipPath id="clip695_749"><rect x="695" y="749" width="280" height="276" rx="5.5"/></clipPath>
<g clip-path="url(#clip695_749)">
<rect x="695" y="749" width="280" height="276" fill="#c9c9c9"/>
<rect x="695" y="749" width="280" height="65" fill="#fca82c"/>
<rect x="699.5" y="786.5" width="271" height="27" rx="5" fill="#96b4de" stroke="#000" stroke-width="1.1"/>
<rect x="695" y="813.3" width="280" height="1.9" fill="#000"/>
<text x="704.34" y="804.7" font-size="15.3" font-weight="normal" font-style="normal" fill="#1a1a1a" textLength="80.85" lengthAdjust="spacingAndGlyphs" stroke="#1a1a1a" stroke-width="0.12">Particles: 61</text>
<g transform="translate(711,817.90)"><rect x="-1" y="-1" width="28" height="28" fill="#3ee83a"/><rect x="0" y="0" width="26" height="26" fill="#000"/><rect x="1.2" y="1.2" width="23.6" height="23.6" fill="#a46ef6"/><polygon points="4.5,9.5 8.5,5 21.5,5 17.5,9.5" fill="#b8b8b8" stroke="#fff" stroke-width="1.5"/><polygon points="17.5,9.5 21.5,5 21.5,17 17.5,21.5" fill="#606060" stroke="#fff" stroke-width="1.5"/><rect x="4.5" y="9.5" width="13" height="12" fill="#808080" stroke="#fff" stroke-width="1.6"/></g>
<path d="M737.5,823.9 L743.5,828.9 V833.9 L741.5,835.9 L740,839.4 L737.5,839.4 Z" fill="#10e010"/>
<text x="749.12" y="837.6" font-size="15.3" font-weight="normal" font-style="normal" fill="#1a1a1a" textLength="185.97" lengthAdjust="spacingAndGlyphs" stroke="#1a1a1a" stroke-width="0.12">PhysX Shape (Convex Hull)</text>
<g transform="translate(711,850.10)"><rect x="0" y="0" width="26" height="26" fill="#000"/><rect x="1.2" y="1.2" width="23.6" height="23.6" fill="#a66ef4"/><rect x="1.2" y="22.2" width="23.6" height="2.6" fill="#7a4ed0"/><path d="M1.5,21.8 H6 M8,20.5 H18 M20,21.8 H24.5" stroke="#000" stroke-width="1.6"/><path d="M4.5,6.5 L12.5,14 L19,8" fill="none" stroke="#000" stroke-width="4.2"/><path d="M4.5,6.5 L12.5,14 L19,8" fill="none" stroke="#5ab4f4" stroke-width="2.2"/><rect x="3" y="5" width="5" height="4.5" fill="#1a4aa0"/><rect x="16.8" y="5.5" width="5.5" height="5" rx="1.5" fill="#fff" stroke="#000" stroke-width="1.6"/></g>
<text x="749.11" y="869.8" font-size="15.3" font-weight="normal" font-style="normal" fill="#1a1a1a" textLength="170.98" lengthAdjust="spacingAndGlyphs" stroke="#1a1a1a" stroke-width="0.12">PhysX Collision (Convex)</text>
<g transform="translate(711,882.30)"><rect x="-1" y="-1" width="28" height="28" fill="#f8c070"/><rect x="0" y="0" width="26" height="26" fill="#000"/><rect x="1.2" y="1.2" width="23.6" height="23.6" fill="#2a9cf2"/><rect x="4.2" y="4.2" width="17.6" height="17.6" fill="#8ad2fa" stroke="#000" stroke-width="1.5"/><rect x="5" y="14" width="7" height="7" fill="#f4f6ff" stroke="#000" stroke-width="1.1"/><path d="M12.5,13.5 L19,7" stroke="#000" stroke-width="1.4"/><path d="M15,6.3 H19.7 V11" fill="none" stroke="#000" stroke-width="2"/><circle cx="12.5" cy="13.5" r="1" fill="#000"/></g>
<rect x="738" y="892.3" width="5" height="3.5" fill="#f5a020"/><rect x="738" y="895.8" width="5" height="2.5" fill="#b87818"/>
<text x="750.10" y="902.0" font-size="15.3" font-weight="normal" font-style="normal" fill="#1a1a1a" textLength="93.79" lengthAdjust="spacingAndGlyphs" stroke="#1a1a1a" stroke-width="0.12">Scale (Inherit)</text>
<g transform="translate(711,914.50)"><rect x="-1" y="-1" width="28" height="28" fill="#3ee83a"/><rect x="0" y="0" width="26" height="26" fill="#000"/><rect x="1.2" y="1.2" width="23.6" height="23.6" fill="#2a9cf2"/><path d="M4.5,9.5 Q13,4 21.5,9.5 Q13,13 4.5,9.5 Z" fill="#a8dcfa" stroke="#000" stroke-width="1.4" stroke-dasharray="2,1"/><path d="M13,7 V22.5" stroke="#000" stroke-width="2.2"/><path d="M8,19 L13,23 L18,19" fill="none" stroke="#000" stroke-width="1.4"/></g>
<path d="M737.5,920.5 L743.5,925.5 V930.5 L741.5,932.5 L740,936.0 L737.5,936.0 Z" fill="#10e010"/>
<text x="749.10" y="934.2" font-size="15.3" font-weight="normal" font-style="normal" fill="#1a1a1a" textLength="101.59" lengthAdjust="spacingAndGlyphs" stroke="#1a1a1a" stroke-width="0.12">Force (Gravity)</text>
<g transform="translate(711,946.70)"><rect x="0" y="0" width="26" height="26" fill="#000"/><rect x="1.2" y="1.2" width="23.6" height="23.6" fill="#f28a1e"/><polygon points="7,7.5 20.5,11.5 12,20.5" fill="#f3d2b0" stroke="#000" stroke-width="1.7" stroke-dasharray="1.8,0.8"/><rect x="4.8" y="5.2" width="4.4" height="3.8" fill="#fff" stroke="#000" stroke-width="1.3"/><rect x="18.6" y="9.6" width="4.4" height="3.4" fill="#fff" stroke="#000" stroke-width="1.3"/><rect x="10.6" y="19" width="3.2" height="4" fill="#fff" stroke="#000" stroke-width="1.3"/></g>
<text x="750.10" y="966.4" font-size="15.3" font-weight="normal" font-style="italic" fill="#1a1a1a" textLength="166.09" lengthAdjust="spacingAndGlyphs" stroke="#1a1a1a" stroke-width="0.12">Mesh (TriMesh [Render])</text>
<g transform="translate(711,978.90)"><rect x="0" y="0" width="26" height="26" fill="#000"/><rect x="1" y="1" width="11" height="11" fill="#40c2c4"/><rect x="14" y="1" width="11" height="11" fill="#40c2c4"/><rect x="1" y="14" width="11" height="11" fill="#40c2c4"/><rect x="14" y="14" width="11" height="11" fill="#fff"/><rect x="15.5" y="15.5" width="8" height="8" fill="#40c2c4"/><rect x="16" y="16" width="2" height="2" fill="#000"/><rect x="16" y="20" width="2" height="2" fill="#000"/><rect x="19" y="18.5" width="2" height="1" fill="#000"/><rect x="22" y="16.5" width="1" height="1" fill="#000"/><rect x="21" y="22" width="1" height="1" fill="#000"/></g>
<text x="749.09" y="998.6" font-size="15.3" font-weight="normal" font-style="normal" fill="#1a1a1a" textLength="133.61" lengthAdjust="spacingAndGlyphs" stroke="#1a1a1a" stroke-width="0.12">Display (Geometry)</text>
<circle cx="950" cy="991.90" r="7.9" fill="#3cc4ea" stroke="#1a1a1a" stroke-width="1"/>
</g>
<rect x="695.5" y="749.5" width="279" height="275" rx="5" fill="none" stroke="#000" stroke-width="1.1"/>
<text x="888.65" y="766.7" font-size="15.3" font-weight="normal" font-style="normal" fill="#1a1a1a" textLength="45.78" lengthAdjust="spacingAndGlyphs" stroke="#1a1a1a" stroke-width="0.12">SCENE</text>
<circle cx="957.4" cy="763" r="7.8" fill="#fff" stroke="#000" stroke-width="1.1"/><rect x="954.6" y="768.9" width="6.9" height="7.4" fill="#fff" stroke="#000" stroke-width="1.1"/><circle cx="957.7" cy="764.8" r="2" fill="#fff" stroke="#000" stroke-width="1"/><path d="M955.5,772.4 H960" stroke="#000" stroke-width="1"/>
<circle cx="973.5" cy="863.1" r="8.9" fill="#d0d0d0" stroke="#000" stroke-width="1.1"/>
<circle cx="835.0" cy="1024.5" r="8.2" fill="#d0d0d0" stroke="#000" stroke-width="1.1"/>
<circle cx="730" cy="748.5" r="8.9" fill="#4a7ef4" stroke="#000" stroke-width="1.1"/>
<rect x="1000" y="0" width="365" height="1031" fill="#444444"/>
<rect x="1000" y="0" width="2" height="1031" fill="#6b6bee"/>
<rect x="1004" y="-10" width="370" height="34" rx="4" fill="#505050"/>
<path d="M1015,5 L1022.2,10 L1015,15 Z" fill="#b4b4b4"/>
<text x="1034.20" y="17.1" font-size="17" font-weight="bold" font-style="normal" fill="#ececec" textLength="55.59" lengthAdjust="spacingAndGlyphs">Timing</text>
<rect x="1004" y="30" width="370" height="175" rx="4" fill="#505050"/><rect x="1006" y="205" width="360" height="1" fill="#3c3c3c"/><rect x="1006" y="24" width="360" height="1" fill="#3e3e3e"/>
<path d="M1014,40 L1024,40 L1019,47.2 Z" fill="#b4b4b4"/>
<text x="1034.00" y="50.9" font-size="17" font-weight="bold" font-style="normal" fill="#ececec" textLength="79.14" lengthAdjust="spacingAndGlyphs">Subdivide</text>
<rect x="1349" y="5" width="1" height="1" fill="#c0c0c0"/>
<rect x="1349" y="7" width="1" height="1" fill="#c0c0c0"/>
<rect x="1349" y="9" width="1" height="1" fill="#c0c0c0"/>
<rect x="1349" y="11" width="1" height="1" fill="#c0c0c0"/>
<rect x="1349" y="13" width="1" height="1" fill="#c0c0c0"/>
<rect x="1351" y="5" width="1" height="1" fill="#c0c0c0"/>
<rect x="1351" y="7" width="1" height="1" fill="#c0c0c0"/>
<rect x="1351" y="9" width="1" height="1" fill="#c0c0c0"/>
<rect x="1351" y="11" width="1" height="1" fill="#c0c0c0"/>
<rect x="1351" y="13" width="1" height="1" fill="#c0c0c0"/>
<rect x="1353" y="5" width="1" height="1" fill="#c0c0c0"/>
<rect x="1353" y="7" width="1" height="1" fill="#c0c0c0"/>
<rect x="1353" y="9" width="1" height="1" fill="#c0c0c0"/>
<rect x="1353" y="11" width="1" height="1" fill="#c0c0c0"/>
<rect x="1353" y="13" width="1" height="1" fill="#c0c0c0"/>
<rect x="1355" y="5" width="1" height="1" fill="#c0c0c0"/>
<rect x="1355" y="7" width="1" height="1" fill="#c0c0c0"/>
<rect x="1355" y="9" width="1" height="1" fill="#c0c0c0"/>
<rect x="1355" y="11" width="1" height="1" fill="#c0c0c0"/>
<rect x="1355" y="13" width="1" height="1" fill="#c0c0c0"/>
<rect x="1357" y="5" width="1" height="1" fill="#c0c0c0"/>
<rect x="1357" y="7" width="1" height="1" fill="#c0c0c0"/>
<rect x="1357" y="9" width="1" height="1" fill="#c0c0c0"/>
<rect x="1357" y="11" width="1" height="1" fill="#c0c0c0"/>
<rect x="1357" y="13" width="1" height="1" fill="#c0c0c0"/>
<rect x="1349" y="39" width="1" height="1" fill="#c0c0c0"/>
<rect x="1349" y="41" width="1" height="1" fill="#c0c0c0"/>
<rect x="1349" y="43" width="1" height="1" fill="#c0c0c0"/>
<rect x="1349" y="45" width="1" height="1" fill="#c0c0c0"/>
<rect x="1349" y="47" width="1" height="1" fill="#c0c0c0"/>
<rect x="1351" y="39" width="1" height="1" fill="#c0c0c0"/>
<rect x="1351" y="41" width="1" height="1" fill="#c0c0c0"/>
<rect x="1351" y="43" width="1" height="1" fill="#c0c0c0"/>
<rect x="1351" y="45" width="1" height="1" fill="#c0c0c0"/>
<rect x="1351" y="47" width="1" height="1" fill="#c0c0c0"/>
<rect x="1353" y="39" width="1" height="1" fill="#c0c0c0"/>
<rect x="1353" y="41" width="1" height="1" fill="#c0c0c0"/>
<rect x="1353" y="43" width="1" height="1" fill="#c0c0c0"/>
<rect x="1353" y="45" width="1" height="1" fill="#c0c0c0"/>
<rect x="1353" y="47" width="1" height="1" fill="#c0c0c0"/>
<rect x="1355" y="39" width="1" height="1" fill="#c0c0c0"/>
<rect x="1355" y="41" width="1" height="1" fill="#c0c0c0"/>
<rect x="1355" y="43" width="1" height="1" fill="#c0c0c0"/>
<rect x="1355" y="45" width="1" height="1" fill="#c0c0c0"/>
<rect x="1355" y="47" width="1" height="1" fill="#c0c0c0"/>
<rect x="1357" y="39" width="1" height="1" fill="#c0c0c0"/>
<rect x="1357" y="41" width="1" height="1" fill="#c0c0c0"/>
<rect x="1357" y="43" width="1" height="1" fill="#c0c0c0"/>
<rect x="1357" y="45" width="1" height="1" fill="#c0c0c0"/>
<rect x="1357" y="47" width="1" height="1" fill="#c0c0c0"/>
<rect x="1011.5" y="72.5" width="349.5" height="125" rx="3" fill="none" stroke="#363636" stroke-width="1"/>
<rect x="1017" y="64" width="77" height="14" fill="#505050"/>
<text x="1020.10" y="77.7" font-size="15.5" font-weight="normal" font-style="normal" fill="#ececec" textLength="69.33" lengthAdjust="spacingAndGlyphs">Subdivide</text>
<text x="1109.56" y="106.8" font-size="15.5" font-weight="normal" font-style="normal" fill="#ececec" textLength="90.19" lengthAdjust="spacingAndGlyphs">Edge length:</text>
<rect x="1204.5" y="85.5" width="144" height="29" fill="#636363" stroke="#cfcfcf" stroke-width="1"/>
<rect x="1212" y="91" width="43.7" height="19.1" fill="#0a72d8"/>
<text x="1212.70" y="106.8" font-size="15.5" font-weight="normal" font-style="normal" fill="#ffffff" textLength="42.62" lengthAdjust="spacingAndGlyphs">5,0cm</text>
<rect x="1255.7" y="90" width="1" height="20.5" fill="#e0e0e0"/>
<path d="M1336.5,99 L1340.25,93 L1344,99 Z M1336.5,101 L1344,101 L1340.25,107 Z" fill="#c8c8c8"/>
<rect x="1026" y="126" width="18" height="18" fill="#5e5e5e"/>
<text x="1050.40" y="141.7" font-size="15.5" font-weight="normal" font-style="normal" fill="#ececec" textLength="114.02" lengthAdjust="spacingAndGlyphs">Relative to scale</text>
<rect x="1026" y="161" width="18" height="18" fill="#5e5e5e"/>
<path d="M1028.5,170 L1031,168 L1034,171.5 L1040.5,164.5 L1042,166 L1034,175.5 Z" fill="#dcdcdc"/>
<text x="1050.40" y="176.6" font-size="15.5" font-weight="normal" font-style="normal" fill="#ececec" textLength="121.75" lengthAdjust="spacingAndGlyphs">Preserve normals</text>
<rect x="998" y="949" width="1.2" height="82" fill="#000"/>
<rect x="999" y="1010" width="1" height="21" fill="#e8e8e8"/>
</svg></body></html>
